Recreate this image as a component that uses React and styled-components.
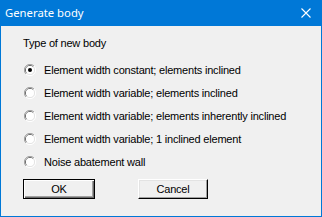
import React from "react";
import styled, { createGlobalStyle } from "styled-components";

const Global = createGlobalStyle`
  html, body { margin: 0; padding: 0; background: #f0f0f0; }
  body { width: 322px; height: 217px; overflow: hidden; }
`;

const Window = styled.div`
  width: 322px;
  height: 217px;
  box-sizing: border-box;
  display: flex;
  flex-direction: column;
  background: #f0f0f0;
  border: 1px solid #0078d7;
  border-top: none;
`;

const TitleBar = styled.div`
  height: 26px;
  margin: 0 -1px;
  background: #0078d7;
  display: flex;
  align-items: center;
  justify-content: space-between;
  padding: 0 11px 0 5px;
  color: #fff;
  font-family: "Noto Sans", "Open Sans", sans-serif;
  font-size: 11.3px;
`;

const Title = styled.span`
  line-height: 26px;
`;

const Content = styled.div`
  display: flex;
  flex-direction: column;
  padding: 11px 0 0 22px;
  font-family: "Liberation Sans", Arial, sans-serif;
  font-size: 11px;
  letter-spacing: -0.2px;
  color: #000;
`;

const Label = styled.div`
  height: 13px;
  line-height: 13px;
`;

const Options = styled.div`
  display: flex;
  flex-direction: column;
  margin-top: 8px;
`;

const Row = styled.label`
  height: 23px;
  display: flex;
  align-items: center;
  gap: 8px;
  padding-left: 1px;
`;

const Buttons = styled.div`
  display: flex;
  gap: 43px;
  margin-top: 6px;
`;

const Button = styled.div`
  box-sizing: border-box;
  width: ${(p) => p.$w}px;
  height: 20px;
  display: flex;
  align-items: center;
  justify-content: center;
  background: #f0f0f0;
  font-size: 11px;
  ${(p) =>
    p.$default
      ? "border: 1px solid #000; box-shadow: inset 1px 1px 0 #fff, inset -1px -1px 0 #696969, inset -2px -2px 0 #a0a0a0;"
      : "border: 1px solid; border-color: #fff #000 #000 #fff; box-shadow: inset -1px -1px 0 #a0a0a0, inset 1px 1px 0 #e3e3e3;"}
`;

const Radio = ({ checked }) => (
  <svg width="12" height="12" viewBox="0 0 12 12">
    <path d="M10 2 A5.5 5.5 0 0 0 2 10" stroke="#a0a0a0" strokeWidth="1" fill="none" />
    <path d="M9.2 2.8 A4.5 4.5 0 0 0 2.8 9.2" stroke="#696969" strokeWidth="1" fill="none" />
    <path d="M2 10 A5.5 5.5 0 0 0 10 2" stroke="#fff" strokeWidth="1" fill="none" />
    <path d="M2.8 9.2 A4.5 4.5 0 0 0 9.2 2.8" stroke="#e3e3e3" strokeWidth="1" fill="none" />
    <circle cx="6" cy="6" r="4" fill="#fff" />
    {checked && <circle cx="6" cy="6" r="2" fill="#000" />}
  </svg>
);

const CloseIcon = () => (
  <svg width="10" height="10" viewBox="0 0 10 10">
    <path d="M0.5 0.5 L9.5 9.5 M9.5 0.5 L0.5 9.5" stroke="#fff" strokeWidth="1.1" />
  </svg>
);

const options = [
  "Element width constant; elements inclined",
  "Element width variable; elements inclined",
  "Element width variable; elements inherently inclined",
  "Element width variable; 1 inclined element",
  "Noise abatement wall",
];

export default function App() {
  return (
    <>
      <Global />
      <Window>
        <TitleBar>
          <Title>Generate body</Title>
          <CloseIcon />
        </TitleBar>
        <Content>
          <Label>Type of new body</Label>
          <Options>
            {options.map((o, i) => (
              <Row key={o}>
                <Radio checked={i === 0} />
                <span>{o}</span>
              </Row>
            ))}
          </Options>
          <Buttons>
            <Button $default $w={72}>OK</Button>
            <Button $w={70}>Cancel</Button>
          </Buttons>
        </Content>
      </Window>
    </>
  );
}
